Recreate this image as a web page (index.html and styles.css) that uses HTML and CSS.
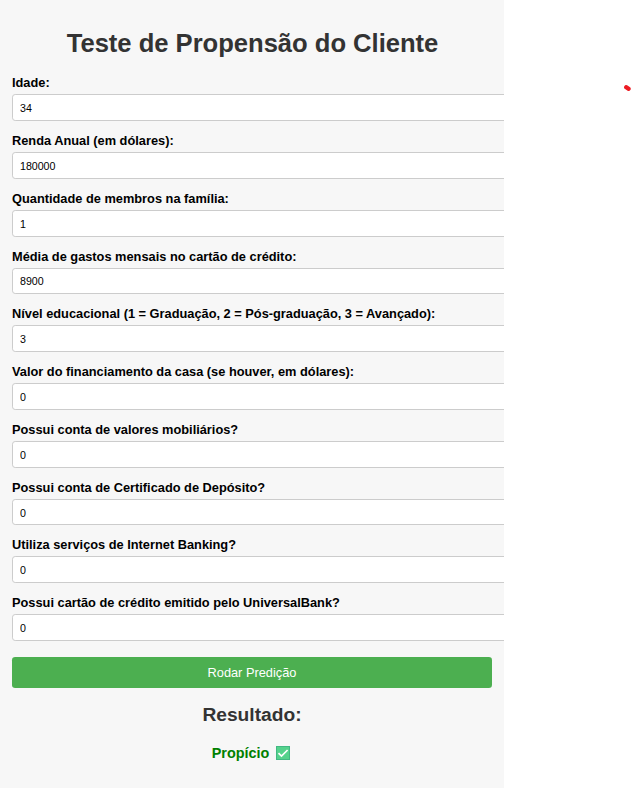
FILE: index.html
```html
<!DOCTYPE html>
<html lang="pt-BR">
<head>
<meta charset="utf-8">
<title>Teste de Propensão do Cliente</title>
<link rel="stylesheet" href="styles.css">
</head>
<body>
<main class="panel">
  <h1 class="title">Teste de Propensão do Cliente</h1>
  <form class="form">
    <div class="field"><label for="f1">Idade:</label><input id="f1" type="text" value="34"></div>
    <div class="field"><label for="f2">Renda Anual (em dólares):</label><input id="f2" type="text" value="180000"></div>
    <div class="field"><label for="f3">Quantidade de membros na família:</label><input id="f3" type="text" value="1"></div>
    <div class="field"><label for="f4">Média de gastos mensais no cartão de crédito:</label><input id="f4" type="text" value="8900"></div>
    <div class="field"><label for="f5">Nível educacional (1 = Graduação, 2 = Pós-graduação, 3 = Avançado):</label><input id="f5" type="text" value="3"></div>
    <div class="field"><label for="f6">Valor do financiamento da casa (se houver, em dólares):</label><input id="f6" type="text" value="0"></div>
    <div class="field"><label for="f7">Possui conta de valores mobiliários?</label><input id="f7" type="text" value="0"></div>
    <div class="field"><label for="f8">Possui conta de Certificado de Depósito?</label><input id="f8" type="text" value="0"></div>
    <div class="field"><label for="f9">Utiliza serviços de Internet Banking?</label><input id="f9" type="text" value="0"></div>
    <div class="field"><label for="f10">Possui cartão de crédito emitido pelo UniversalBank?</label><input id="f10" type="text" value="0"></div>
    <button class="submit" type="button">Rodar Predição</button>
  </form>
  <h2 class="subtitle">Resultado:</h2>
  <p class="result">Propício
    <svg class="check" viewBox="0 0 14 14"><rect width="14" height="14" fill="#42b883"/><rect x="1" y="1" width="12" height="12" fill="#55d28c"/><path d="M2.5 7.2 5.5 10.1 11.6 4" fill="none" stroke="#fff" stroke-width="1.7"/></svg>
  </p>
</main>
<svg class="mark" viewBox="0 0 7 6"><path d="M2.3 2.3 4.5 3.8" stroke="#ed1c24" stroke-width="4.4" stroke-linecap="round"/></svg>
</body>
</html>
```
FILE: styles.css
```css
body {
  margin: 0;
  height: 788px;
  background: #fff;
  font-family: "Liberation Sans", Arial, sans-serif;
  overflow: hidden;
}

.panel {
  box-sizing: border-box;
  width: 504px;
  height: 788px;
  padding: 28px 12px 0;
  background: #f7f7f7;
  overflow: hidden;
}

.title {
  margin: 0 0 17.32px;
  padding-left: 1px;
  font-size: 25.6px;
  line-height: 30px;
  letter-spacing: -0.02px;
  text-align: center;
  color: #333;
}

.field {
  height: 57.78px;
}

.field label {
  display: block;
  margin-bottom: 4px;
  font-size: 12.8px;
  line-height: 15px;
  font-weight: bold;
  color: #000;
  white-space: nowrap;
}

.field input {
  display: block;
  box-sizing: border-box;
  width: 500px;
  height: 26.7px;
  margin: 0;
  padding: 1px 7px 0;
  border: 1px solid #ccc;
  border-radius: 3.2px;
  background: #fff;
  font: 10.67px "Liberation Sans", Arial, sans-serif;
  letter-spacing: -0.05px;
  color: #000;
}

.submit {
  display: block;
  width: 480px;
  height: 31px;
  margin: 3.88px 0 0;
  padding: 0;
  border: 0;
  border-radius: 3.2px;
  background: #4caf50;
  font: 12.8px "Liberation Sans", Arial, sans-serif;
  color: #fff;
}

.subtitle {
  margin: 16px 0 0;
  font-size: 19.2px;
  line-height: 22px;
  text-align: center;
  color: #333;
}

.result {
  display: flex;
  justify-content: center;
  align-items: center;
  gap: 7px;
  margin: 19px 0 0;
  padding-right: 2px;
  font-size: 14.4px;
  line-height: 17px;
  font-weight: bold;
  color: green;
}

.check {
  width: 14px;
  height: 14px;
}

.mark {
  position: absolute;
  left: 624px;
  top: 85px;
  width: 7px;
  height: 6px;
}
```
